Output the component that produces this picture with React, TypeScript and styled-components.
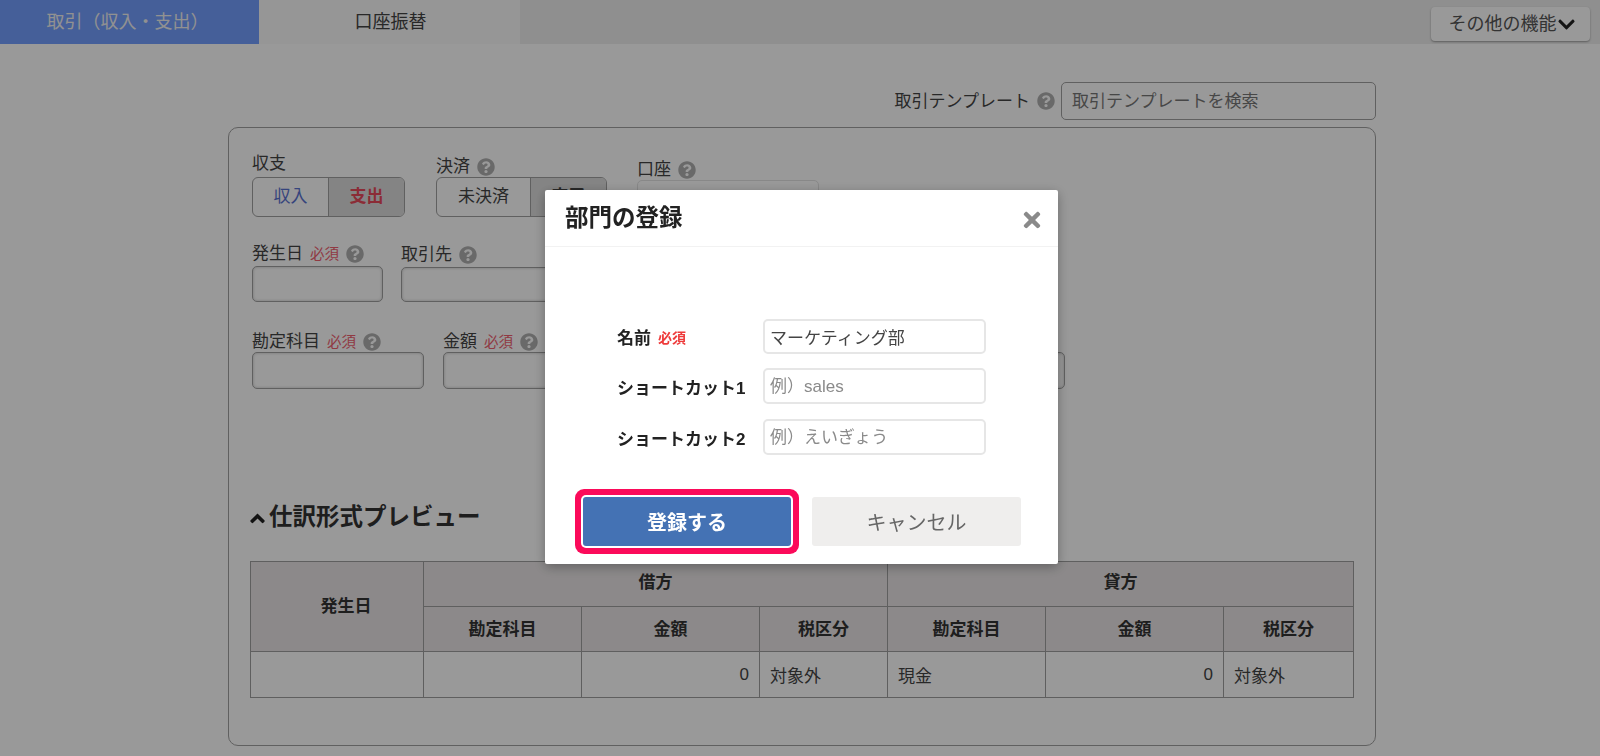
import React from "react";
import styled, { createGlobalStyle } from "styled-components";
import { FaQuestionCircle, FaTimes, FaChevronDown, FaAngleUp } from "react-icons/fa";

const Global = createGlobalStyle`
  html, body { margin: 0; padding: 0; background: #fff; height: 100%; overflow: hidden; }
  body { font-family: "Liberation Sans", "Noto Sans CJK JP", sans-serif; font-size: 17px; color: #444; }
  * { box-sizing: border-box; }
`;

const TabBar = styled.div`
  height: 44px;
  background: #eeeeee;
  display: flex;
  align-items: stretch;
`;
const Tab = styled.div<{ $active?: boolean }>`
  width: ${(p) => (p.$active ? 259 : 261)}px;
  display: flex;
  align-items: center;
  justify-content: center;
  font-size: 18px;
  padding: ${(p) => (p.$active ? "0 4px 4px 0" : "0 0 4px 2px")};
  background: ${(p) => (p.$active ? "#739fff" : "#fafafa")};
  color: ${(p) => (p.$active ? "#f2f2f2" : "#444")};
`;
const OtherButton = styled.button`
  margin: 7px 10px 3px auto;
  width: 159px;
  border: 0;
  border-radius: 4px;
  background: #fff;
  box-shadow: 0 1px 2px rgba(0, 0, 0, 0.35);
  font: inherit;
  font-size: 18px;
  color: #555;
  display: flex;
  align-items: center;
  justify-content: center;
  padding: 0 0 5px 3px;
  svg { color: #222; width: 19px; height: 19px; margin-top: 5px; }
`;

const Main = styled.main`
  padding: 38px 224px 0 228px;
`;
const TemplateRow = styled.div`
  display: flex;
  justify-content: flex-end;
  align-items: center;
  gap: 6px;
  height: 38px;
`;
const TemplateLabel = styled.span`
  margin-bottom: 4px;
  margin-right: 1px;
`;
const TemplateInput = styled.div`
  width: 315px;
  height: 38px;
  border: 1px solid #a0a0a0;
  border-radius: 5px;
  padding: 0 10px 4px;
  display: flex;
  align-items: center;
  color: #777;
`;
const Card = styled.section`
  margin-top: 7px;
  height: 619px;
  border: 1px solid #a0a0a0;
  border-radius: 10px;
  padding: 25px 21px 0 23px;
`;
const FormRow = styled.div<{ $top?: number }>`
  display: flex;
  align-items: flex-end;
  margin-top: ${(p) => p.$top ?? 0}px;
`;
const Field = styled.div<{ $left?: number }>`
  margin-left: ${(p) => p.$left ?? 0}px;
  display: flex;
  flex-direction: column;
`;
const Label = styled.div<{ $gap?: number }>`
  height: 22px;
  line-height: 22px;
  margin-bottom: ${(p) => p.$gap ?? 1}px;
  display: flex;
  align-items: center;
  gap: 7px;
  white-space: nowrap;
`;
const Required = styled.span`
  font-size: 14.5px;
  color: #f0606f;
`;
const Help = styled(FaQuestionCircle)`
  width: 18px;
  height: 18px;
  color: #b0b0b0;
  flex: none;
`;
const Toggle = styled.div`
  display: flex;
  height: 40px;
  border: 1px solid #a0a0a0;
  border-radius: 6px;
  overflow: hidden;
`;
const ToggleItem = styled.div<{ $w: number; $on?: boolean; $color?: string }>`
  width: ${(p) => p.$w}px;
  display: flex;
  align-items: center;
  justify-content: center;
  background: ${(p) => (p.$on ? "#dddddd" : "transparent")};
  font-weight: ${(p) => (p.$on ? 700 : 400)};
  color: ${(p) => p.$color ?? "#444"};
  padding-bottom: 6px;
  & + & { border-left: 1px solid #a0a0a0; }
`;
const Input = styled.div<{ $w: number; $h: number; $soft?: boolean }>`
  width: ${(p) => p.$w}px;
  height: ${(p) => p.$h}px;
  border: 1px solid ${(p) => (p.$soft ? "#e3e3e3" : "#a0a0a0")};
  border-radius: 5px;
  box-shadow: ${(p) => (p.$soft ? "none" : "inset 0 0 3px rgba(0,0,0,.25)")};
  padding: 0 14px;
  display: flex;
  align-items: center;
`;
const Heading = styled.h2`
  margin: 111px 0 0 -6px;
  height: 30px;
  display: flex;
  align-items: center;
  font-size: 23.5px;
  font-weight: 700;
  color: #333;
  svg { width: 23px; height: 23px; color: #222; margin-top: 6px; flex: none; }
`;
const Table = styled.table`
  margin: 31px 0 0 -2px;
  width: 1103px;
  border-collapse: collapse;
  table-layout: fixed;
  border: 1px solid #9e9e9e;
`;
const Th = styled.th<{ $offset?: number; $lift?: number }>`
  height: 45px;
  border: 1px solid #9e9e9e;
  background: #e9e5e6;
  font-size: 17px;
  font-weight: 700;
  color: #333;
  padding: 0 0 ${(p) => p.$lift ?? 4}px ${(p) => p.$offset ?? 0}px;
`;
const Td = styled.td<{ $right?: boolean }>`
  height: 46px;
  border: 1px solid #9e9e9e;
  padding: 0 10px;
  text-align: ${(p) => (p.$right ? "right" : "left")};
  font-size: 17px;
`;

const Overlay = styled.div`
  position: fixed;
  inset: 0;
  background: rgba(0, 0, 0, 0.4);
  padding: 190px 0 0 545px;
`;
const Modal = styled.div`
  width: 513px;
  height: 374px;
  background: #fff;
  border-radius: 2px;
  box-shadow: 0 3px 12px rgba(0, 0, 0, 0.3);
  color: #222;
`;
const ModalHeader = styled.header`
  height: 57px;
  border-bottom: 1px solid #f2f2f2;
  padding: 0 14px 0 20px;
  display: flex;
  align-items: center;
  justify-content: space-between;
`;
const ModalTitle = styled.h1`
  margin: -5px 0 0;
  font-size: 23.5px;
  font-weight: 700;
  color: #222;
`;
const Close = styled(FaTimes)`
  width: 24px;
  height: 24px;
  color: #8a8a8a;
  margin-top: 4px;
`;
const ModalForm = styled.div`
  padding: 72px 0 0 72px;
  display: flex;
  flex-direction: column;
  gap: 14px;
`;
const ModalRow = styled.div<{ $top?: number }>`
  display: flex;
  align-items: center;
  margin-top: ${(p) => p.$top ?? 0}px;
`;
const ModalLabel = styled.div`
  width: 146px;
  font-size: 17px;
  font-weight: 700;
  display: flex;
  align-items: center;
  gap: 7px;
  white-space: nowrap;
`;
const ModalRequired = styled.span`
  font-size: 14px;
  color: #ee3b3b;
`;
const ModalInput = styled.div<{ $h: number; $placeholder?: boolean }>`
  width: 223px;
  height: ${(p) => p.$h}px;
  border: 2px solid #e6e6e6;
  border-radius: 5px;
  padding: ${(p) => (p.$placeholder ? "0 5px 4px" : "0 5px")};
  display: flex;
  align-items: center;
  font-size: 17px;
  color: ${(p) => (p.$placeholder ? "#8a8a8a" : "#444")};
`;
const Actions = styled.div`
  padding: 42px 0 0 38px;
  display: flex;
  gap: 21px;
`;
const PrimaryButton = styled.button`
  width: 208px;
  height: 49px;
  border: 0;
  border-radius: 3px;
  background: #4472b4;
  color: #fff;
  font: inherit;
  font-size: 20px;
  font-weight: 700;
  box-shadow: 0 0 0 2px #fff, 0 0 0 8px #fb0a5a;
`;
const CancelButton = styled.button`
  width: 209px;
  height: 49px;
  border: 0;
  border-radius: 3px;
  background: #efeeed;
  color: #666;
  font: inherit;
  font-size: 20px;
`;

const widths = [173, 158, 178, 128, 158, 178, 130];

export default function App() {
  return (
    <>
      <Global />
      <TabBar>
        <Tab $active>取引（収入・支出）</Tab>
        <Tab>口座振替</Tab>
        <OtherButton>その他の機能<FaChevronDown /></OtherButton>
      </TabBar>
      <Main>
        <TemplateRow>
          <TemplateLabel>取引テンプレート</TemplateLabel> <Help />
          <TemplateInput>取引テンプレートを検索</TemplateInput>
        </TemplateRow>
        <Card>
          <FormRow>
            <Field>
              <Label $gap={2}>収支</Label>
              <Toggle>
                <ToggleItem $w={75} $color="#5a72d0">収入</ToggleItem>
                <ToggleItem $w={76} $on $color="#e84a5a">支出</ToggleItem>
              </Toggle>
            </Field>
            <Field $left={31}>
              <Label $gap={-1}>決済 <Help /></Label>
              <Toggle>
                <ToggleItem $w={93}>未決済</ToggleItem>
                <ToggleItem $w={76} $on>完了</ToggleItem>
              </Toggle>
            </Field>
            <Field $left={30}>
              <Label $gap={-1}>口座 <Help /></Label>
              <Input $w={182} $h={37} $soft>現金</Input>
            </Field>
          </FormRow>
          <FormRow $top={26}>
            <Field>
              <Label>発生日 <Required>必須</Required> <Help /></Label>
              <Input $w={131} $h={36} />
            </Field>
            <Field $left={18}>
              <Label>取引先 <Help /></Label>
              <Input $w={300} $h={35} />
            </Field>
          </FormRow>
          <FormRow $top={29}>
            <Field>
              <Label $gap={-1}>勘定科目 <Required>必須</Required> <Help /></Label>
              <Input $w={172} $h={37} />
            </Field>
            <Field $left={19}>
              <Label $gap={-1}>金額 <Required>必須</Required> <Help /></Label>
              <Input $w={200} $h={37} />
            </Field>
            <Field $left={209}>
              <Input $w={213} $h={37} />
            </Field>
          </FormRow>
          <Heading><FaAngleUp />仕訳形式プレビュー</Heading>
          <Table>
            <colgroup>
              {widths.map((w, i) => <col key={i} style={{ width: w }} />)}
            </colgroup>
            <thead>
              <tr>
                <Th rowSpan={2} $offset={18}>発生日</Th>
                <Th colSpan={3} $lift={7}>借方</Th>
                <Th colSpan={3} $lift={7}>貸方</Th>
              </tr>
              <tr>
                <Th>勘定科目</Th><Th>金額</Th><Th>税区分</Th>
                <Th>勘定科目</Th><Th>金額</Th><Th>税区分</Th>
              </tr>
            </thead>
            <tbody>
              <tr>
                <Td /><Td /><Td $right>0</Td><Td>対象外</Td>
                <Td>現金</Td><Td $right>0</Td><Td>対象外</Td>
              </tr>
            </tbody>
          </Table>
        </Card>
      </Main>
      <Overlay>
        <Modal>
          <ModalHeader>
            <ModalTitle>部門の登録</ModalTitle>
            <Close />
          </ModalHeader>
          <ModalForm>
            <ModalRow>
              <ModalLabel>名前 <ModalRequired>必須</ModalRequired></ModalLabel>
              <ModalInput $h={35}>マーケティング部</ModalInput>
            </ModalRow>
            <ModalRow>
              <ModalLabel>ショートカット1</ModalLabel>
              <ModalInput $h={36} $placeholder>例）sales</ModalInput>
            </ModalRow>
            <ModalRow $top={1}>
              <ModalLabel>ショートカット2</ModalLabel>
              <ModalInput $h={36} $placeholder>例）えいぎょう</ModalInput>
            </ModalRow>
          </ModalForm>
          <Actions>
            <PrimaryButton>登録する</PrimaryButton>
            <CancelButton>キャンセル</CancelButton>
          </Actions>
        </Modal>
      </Overlay>
    </>
  );
}
